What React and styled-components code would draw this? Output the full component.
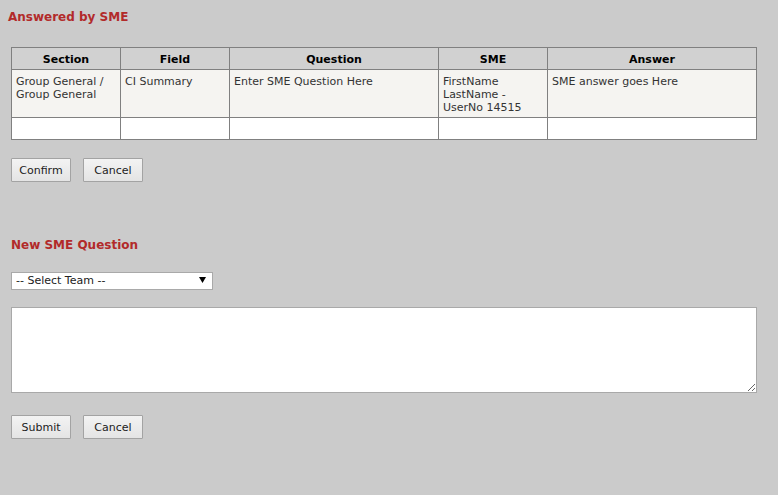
import React from "react";
import styled, { createGlobalStyle } from "styled-components";

const answers = [
    {
        section: ["Group General /", "Group General"],
        field: ["CI Summary"],
        question: ["Enter SME Question Here"],
        sme: ["FirstName", "LastName -", "UserNo 14515"],
        answer: ["SME answer goes Here"],
    },
];

const columns = [
    { key: "section", title: "Section", width: 109 },
    { key: "field", title: "Field", width: 109 },
    { key: "question", title: "Question", width: 209 },
    { key: "sme", title: "SME", width: 109 },
    { key: "answer", title: "Answer", width: 209 },
];

function Lines({ items }) {
    return items.map((line, i) => (
        <React.Fragment key={i}>
            {i > 0 && <br />}
            {line}
        </React.Fragment>
    ));
}

function App() {
    return (
        <>
            <GlobalStyle />
            <Page>
                <Title $indent={8} $top={9}>
                    Answered by SME
                </Title>
                <Table>
                    <colgroup>
                        {columns.map((col) => (
                            <col key={col.key} width={col.width} />
                        ))}
                    </colgroup>
                    <thead>
                        <tr>
                            {columns.map((col) => (
                                <HeadCell key={col.key}>{col.title}</HeadCell>
                            ))}
                        </tr>
                    </thead>
                    <tbody>
                        {answers.map((row, i) => (
                            <Row key={i}>
                                {columns.map((col) => (
                                    <Cell key={col.key}>
                                        <Lines items={row[col.key]} />
                                    </Cell>
                                ))}
                            </Row>
                        ))}
                        <Row $empty>
                            {columns.map((col) => (
                                <Cell key={col.key}>&nbsp;</Cell>
                            ))}
                        </Row>
                    </tbody>
                </Table>
                <ButtonRow $top={18}>
                    <Button>Confirm</Button>
                    <Button>Cancel</Button>
                </ButtonRow>

                <Title $indent={11} $top={55}>
                    New SME Question
                </Title>
                <SelectWrap>
                    <Select defaultValue="">
                        <option value="">-- Select Team --</option>
                    </Select>
                    <Arrow viewBox="0 0 7 6">
                        <path d="M0 0h7L3.5 6z" fill="#000" />
                    </Arrow>
                </SelectWrap>
                <TextArea />
                <ButtonRow $top={22}>
                    <Button>Submit</Button>
                    <Button>Cancel</Button>
                </ButtonRow>
            </Page>
        </>
    );
}

export default App;

const GlobalStyle = createGlobalStyle`
    html, body {
        margin: 0;
        background: #cbcbcb;
    }
    body {
        font-family: "DejaVu Sans", Verdana, sans-serif;
        font-size: 11px;
        color: #333;
    }
`;

const Page = styled.div`
    min-height: 495px;
    padding: 0 22px 40px 11px;
    box-sizing: border-box;
    display: flex;
    flex-direction: column;
    align-items: flex-start;
`;

const Title = styled.h2`
    margin: ${({ $top }) => $top}px 0 0 ${({ $indent }) => $indent - 11}px;
    font-size: 12px;
    line-height: 16px;
    font-weight: bold;
    color: #b22a2a;
`;

const Table = styled.table`
    margin-top: 22px;
    width: 746px;
    table-layout: fixed;
    border-collapse: collapse;
    border: 1px solid #808080;
`;

const HeadCell = styled.th`
    background: #d1d1d1;
    border: 1px solid #808080;
    padding: 5px 4px 3px;
    line-height: 13px;
    font-weight: bold;
    color: #000;
    text-align: center;
`;

const Row = styled.tr`
    background: ${({ $empty }) => ($empty ? "#fff" : "#f5f4f1")};
`;

const Cell = styled.td`
    border: 1px solid #808080;
    padding: 5px 4px 3px;
    line-height: 13px;
    vertical-align: top;
    text-align: left;
    color: #333;
`;

const ButtonRow = styled.div`
    margin-top: ${({ $top }) => $top}px;
    display: flex;
    gap: 12px;
`;

const Button = styled.button`
    width: 60px;
    height: 24px;
    padding: 0;
    border: 1px solid #a3a3a3;
    border-radius: 1px;
    background: linear-gradient(#f3f3f3, #e4e4e4);
    font-family: "DejaVu Sans", Verdana, sans-serif;
    font-size: 11px;
    color: #222;
`;

const SelectWrap = styled.div`
    position: relative;
    margin-top: 19px;
    width: 202px;
`;

const Select = styled.select`
    appearance: none;
    display: block;
    width: 202px;
    height: 18px;
    padding: 0 0 0 4px;
    border: 1px solid #a9a9a9;
    border-radius: 0;
    background: #fff;
    font-family: "DejaVu Sans", Verdana, sans-serif;
    font-size: 11px;
    line-height: 16px;
    color: #222;
    outline: none;
`;

const Arrow = styled.svg`
    position: absolute;
    right: 7px;
    top: 5px;
    width: 7px;
    height: 6px;
    pointer-events: none;
`;

const TextArea = styled.textarea`
    display: block;
    margin-top: 17px;
    width: 746px;
    height: 86px;
    box-sizing: border-box;
    border: 1px solid #a9a9a9;
    border-radius: 0;
    background: #fff;
    padding: 2px;
    font-family: "DejaVu Sans", Verdana, sans-serif;
    font-size: 11px;
    outline: none;
`;
